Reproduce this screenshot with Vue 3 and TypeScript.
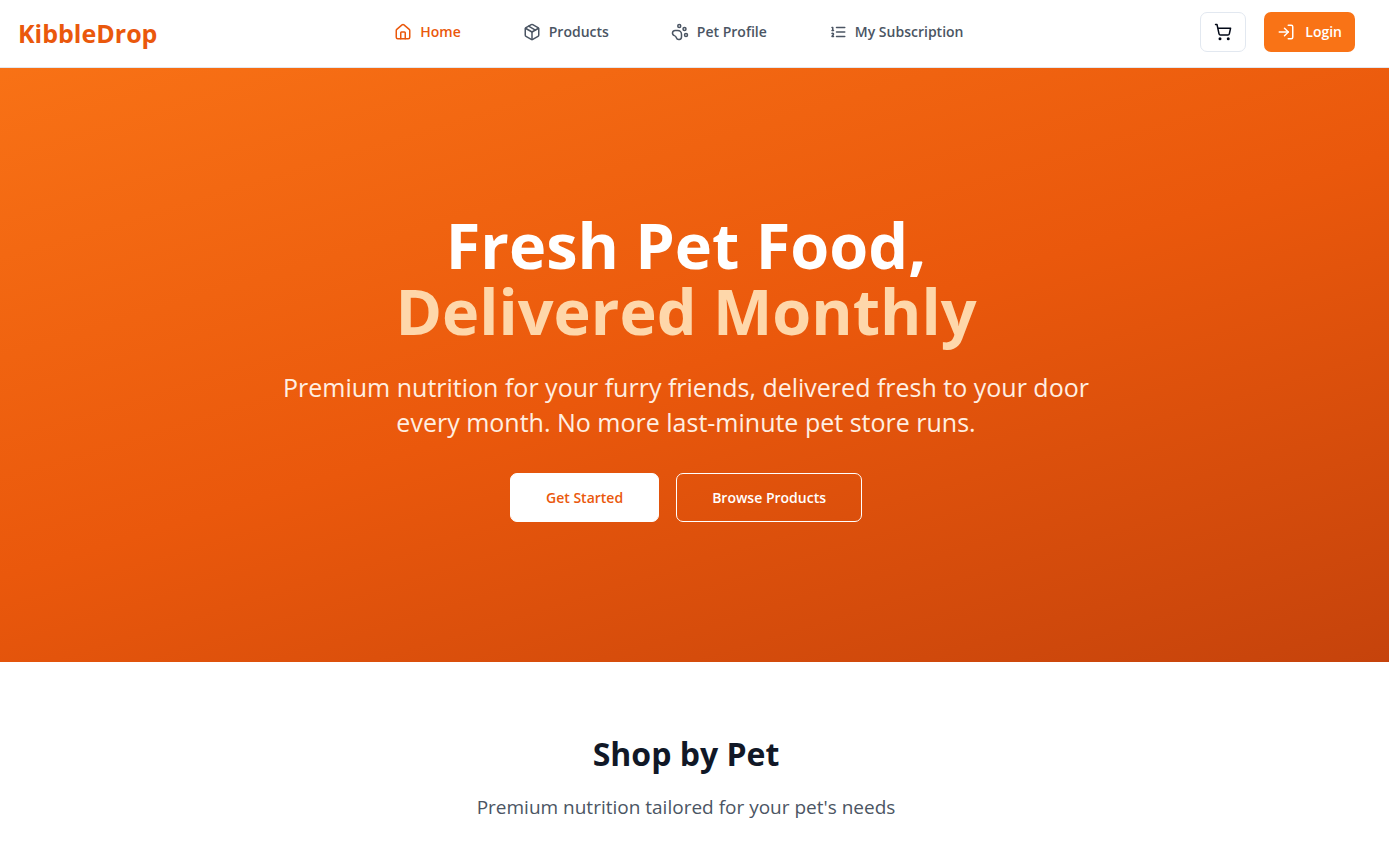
<script setup lang="ts">
interface NavItem {
  label: string
  href: string
  paths: string[]
  circles?: [number, number, number][]
  active?: boolean
}

const navItems: NavItem[] = [
  {
    label: 'Home',
    href: '#home',
    active: true,
    paths: [
      'M15 21v-8a1 1 0 0 0-1-1h-4a1 1 0 0 0-1 1v8',
      'M3 10a2 2 0 0 1 .709-1.528l7-5.999a2 2 0 0 1 2.582 0l7 5.999A2 2 0 0 1 21 10v9a2 2 0 0 1-2 2H5a2 2 0 0 1-2-2z',
    ],
  },
  {
    label: 'Products',
    href: '#products',
    paths: [
      'm7.5 4.27 9 5.15',
      'M21 8a2 2 0 0 0-1-1.73l-7-4a2 2 0 0 0-2 0l-7 4A2 2 0 0 0 3 8v8a2 2 0 0 0 1 1.73l7 4a2 2 0 0 0 2 0l7-4A2 2 0 0 0 21 16Z',
      'm3.3 7 8.7 5 8.7-5',
      'M12 22V12',
    ],
  },
  {
    label: 'Pet Profile',
    href: '#pet-profile',
    circles: [[11, 4, 2], [18, 8, 2], [20, 16, 2]],
    paths: [
      'M9 10a5 5 0 0 1 5 5v3.5a3.5 3.5 0 0 1-6.84 1.045Q6.52 17.48 4.46 16.84A3.5 3.5 0 0 1 5.5 10Z',
    ],
  },
  {
    label: 'My Subscription',
    href: '#subscription',
    paths: ['M10 12h11', 'M10 18h11', 'M10 6h11', 'M4 10h2', 'M4 6h1v4', 'M6 18H4c0-1 2-2 2-3s-1-1.5-2-1'],
  },
]
</script>

<template>
  <div class="page">
    <header class="header">
      <a class="brand" href="#home">KibbleDrop</a>
      <nav class="nav" aria-label="Main">
        <a
          v-for="item in navItems"
          :key="item.label"
          class="nav-link"
          :class="{ active: item.active }"
          :href="item.href"
          :aria-current="item.active ? 'page' : undefined"
        >
          <svg class="icon" viewBox="0 0 24 24" aria-hidden="true">
            <circle v-for="(c, i) in item.circles" :key="i" :cx="c[0]" :cy="c[1]" :r="c[2]" />
            <path v-for="d in item.paths" :key="d" :d="d" />
          </svg>
          <span>{{ item.label }}</span>
        </a>
      </nav>
      <div class="actions">
        <button class="cart" type="button" aria-label="Cart">
          <svg class="icon" viewBox="0 0 24 24" aria-hidden="true">
            <circle cx="8" cy="21" r="1" />
            <circle cx="19" cy="21" r="1" />
            <path d="M2.05 2.05h2l2.66 12.42a2 2 0 0 0 2 1.58h9.78a2 2 0 0 0 1.95-1.57l1.65-7.43H5.12" />
          </svg>
        </button>
        <button class="login" type="button">
          <svg class="icon" viewBox="0 0 24 24" aria-hidden="true">
            <path d="M15 3h4a2 2 0 0 1 2 2v14a2 2 0 0 1-2 2h-4" />
            <path d="m10 17 5-5-5-5" />
            <path d="M15 12H3" />
          </svg>
          <span>Login</span>
        </button>
      </div>
    </header>

    <main>
      <section class="hero">
        <h1 class="hero-title">
          Fresh Pet Food,
          <span class="hero-accent">Delivered Monthly</span>
        </h1>
        <p class="hero-text">
          Premium nutrition for your furry friends, delivered fresh to your door every month. No more last-minute pet
          store runs.
        </p>
        <div class="hero-actions">
          <button class="cta cta-solid" type="button">Get Started</button>
          <button class="cta cta-outline" type="button">Browse Products</button>
        </div>
      </section>

      <section class="shop">
        <h2 class="shop-title">Shop by Pet</h2>
        <p class="shop-text">Premium nutrition tailored for your pet's needs</p>
      </section>
    </main>
  </div>
</template>

<style>
body {
  margin: 0;
  background: #ffffff;
}
</style>

<style scoped>
.page {
  --edge: 17px;
  font-family: 'Segoe UI', 'Open Sans', 'Noto Sans', sans-serif;
  color: #111827;
}

h1,
h2,
p {
  margin: 0;
}

button {
  font: inherit;
  cursor: pointer;
}

.header {
  display: flex;
  justify-content: space-between;
  align-items: center;
  box-sizing: border-box;
  min-height: 68px;
  padding: 0 calc(var(--edge) + 17px) 4px 18px;
  border-bottom: 1px solid #e2e8f0;
}

.brand {
  padding-top: 2px;
  color: #ea580c;
  font-size: 25px;
  line-height: 36px;
  font-weight: 700;
  text-decoration: none;
}

.nav {
  display: flex;
  gap: 62px;
}

.nav-link {
  display: flex;
  align-items: center;
  gap: 8px;
  color: #4b5563;
  font-size: 14px;
  line-height: 24px;
  font-weight: 600;
  text-decoration: none;
}

.nav-link.active {
  color: #ea580c;
}

.icon {
  flex: none;
  width: 18px;
  height: 18px;
  fill: none;
  stroke: currentColor;
  stroke-width: 2;
  stroke-linecap: round;
  stroke-linejoin: round;
}

.actions {
  display: flex;
  gap: 18px;
}

.cart,
.login {
  display: flex;
  align-items: center;
  justify-content: center;
  box-sizing: border-box;
  height: 40px;
  border-radius: 7px;
}

.cart {
  width: 46px;
  padding: 0;
  border: 1px solid #e2e8f0;
  background: #ffffff;
  color: #020817;
}

.login {
  gap: 10px;
  padding: 0 13px;
  border: 0;
  background: #f97316;
  color: #ffffff;
  font-size: 14px;
  font-weight: 600;
}

.hero {
  display: flex;
  flex-direction: column;
  align-items: center;
  padding: 144px calc(var(--edge) + 18px) 140px 18px;
  background: linear-gradient(163deg, #f97316 -3%, #ea580c 50%, #c2410c 105%);
  text-align: center;
}

.hero-title {
  color: #ffffff;
  font-size: 63px;
  line-height: 66px;
  font-weight: 700;
}

.hero-accent {
  display: block;
  color: #fed7aa;
}

.hero-text {
  max-width: 844px;
  margin-top: 26px;
  color: #ffefe2;
  font-size: 25px;
  line-height: 35px;
  font-weight: 400;
}

.hero-actions {
  display: flex;
  flex-wrap: wrap;
  justify-content: center;
  gap: 17px;
  margin-top: 33px;
}

.cta {
  box-sizing: border-box;
  height: 49px;
  padding: 0 35px;
  border: 1px solid #ffffff;
  border-radius: 7px;
  font-size: 14px;
  font-weight: 600;
}

.cta-solid {
  background: #ffffff;
  color: #ea580c;
}

.cta-outline {
  background: transparent;
  color: #ffffff;
}

.shop {
  padding: 70px calc(var(--edge) + 18px) 40px 18px;
  text-align: center;
}

.shop-title {
  font-size: 32px;
  line-height: 44px;
  font-weight: 700;
}

.shop-text {
  margin-top: 16px;
  color: #4b5563;
  font-size: 19px;
  line-height: 30px;
}
</style>
